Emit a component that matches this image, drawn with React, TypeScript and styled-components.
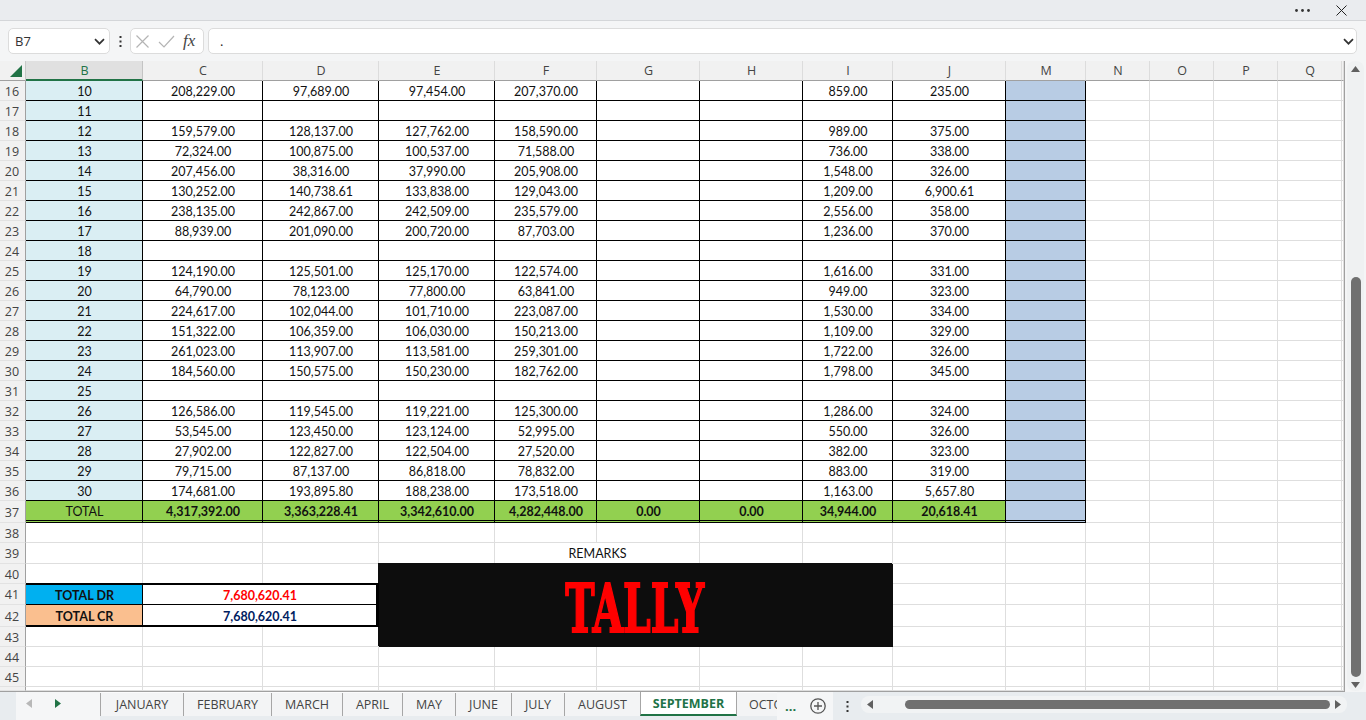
import React from "react";
import styled, { createGlobalStyle } from "styled-components";

const GlobalStyle = createGlobalStyle`
  html, body {
    margin: 0;
    height: 100%;
    overflow: hidden;
    background: #f4f5f6;
  }
`;

const columns = ["B", "C", "D", "E", "F", "G", "H", "I", "J", "M", "N", "O", "P", "Q"];

// day, C, D, E, F, I, J
const rows: string[][] = [
  ["10", "208,229.00", "97,689.00", "97,454.00", "207,370.00", "859.00", "235.00"],
  ["11"],
  ["12", "159,579.00", "128,137.00", "127,762.00", "158,590.00", "989.00", "375.00"],
  ["13", "72,324.00", "100,875.00", "100,537.00", "71,588.00", "736.00", "338.00"],
  ["14", "207,456.00", "38,316.00", "37,990.00", "205,908.00", "1,548.00", "326.00"],
  ["15", "130,252.00", "140,738.61", "133,838.00", "129,043.00", "1,209.00", "6,900.61"],
  ["16", "238,135.00", "242,867.00", "242,509.00", "235,579.00", "2,556.00", "358.00"],
  ["17", "88,939.00", "201,090.00", "200,720.00", "87,703.00", "1,236.00", "370.00"],
  ["18"],
  ["19", "124,190.00", "125,501.00", "125,170.00", "122,574.00", "1,616.00", "331.00"],
  ["20", "64,790.00", "78,123.00", "77,800.00", "63,841.00", "949.00", "323.00"],
  ["21", "224,617.00", "102,044.00", "101,710.00", "223,087.00", "1,530.00", "334.00"],
  ["22", "151,322.00", "106,359.00", "106,030.00", "150,213.00", "1,109.00", "329.00"],
  ["23", "261,023.00", "113,907.00", "113,581.00", "259,301.00", "1,722.00", "326.00"],
  ["24", "184,560.00", "150,575.00", "150,230.00", "182,762.00", "1,798.00", "345.00"],
  ["25"],
  ["26", "126,586.00", "119,545.00", "119,221.00", "125,300.00", "1,286.00", "324.00"],
  ["27", "53,545.00", "123,450.00", "123,124.00", "52,995.00", "550.00", "326.00"],
  ["28", "27,902.00", "122,827.00", "122,504.00", "27,520.00", "382.00", "323.00"],
  ["29", "79,715.00", "87,137.00", "86,818.00", "78,832.00", "883.00", "319.00"],
  ["30", "174,681.00", "193,895.80", "188,238.00", "173,518.00", "1,163.00", "5,657.80"],
];

const totals = ["4,317,392.00", "3,363,228.41", "3,342,610.00", "4,282,448.00", "0.00", "0.00", "34,944.00", "20,618.41"];

const tabs = [
  { name: "JANUARY", width: 83 },
  { name: "FEBRUARY", width: 88 },
  { name: "MARCH", width: 71 },
  { name: "APRIL", width: 60 },
  { name: "MAY", width: 53 },
  { name: "JUNE", width: 56 },
  { name: "JULY", width: 53 },
  { name: "AUGUST", width: 76 },
  { name: "SEPTEMBER", width: 97, active: true },
];

const Page = styled.div`
  width: 1366px;
  height: 720px;
  display: flex;
  flex-direction: column;
  overflow: hidden;
`;

const TitleBar = styled.div`
  height: 20px;
  flex: none;
  background: #eaecef;
  border-bottom: 1px solid #d4d6d9;
  display: flex;
  align-items: center;
  justify-content: flex-end;
  gap: 26px;
  padding-right: 19px;
  color: #222;
`;

const FormulaBar = styled.div`
  height: 40px;
  flex: none;
  box-sizing: border-box;
  padding: 7px 9px 7px 8px;
  display: flex;
  align-items: flex-start;
`;

const Field = styled.div<{ $width?: number }>`
  box-sizing: border-box;
  height: 26px;
  background: #fff;
  border: 1px solid #dcdcdc;
  border-radius: 5px;
  display: flex;
  align-items: center;
  ${(p) => (p.$width ? `width: ${p.$width}px; flex: none;` : "flex: 1;")}
`;

const NameBox = styled(Field)`
  justify-content: space-between;
  padding: 0 4px 0 6px;
  font: 13px "Open Sans", sans-serif;
  color: #333;
`;

const FormulaInput = styled(Field)`
  justify-content: space-between;
  padding: 0 2px 0 11px;
  font: 13px "Open Sans", sans-serif;
  color: #222;
`;

const ButtonGroup = styled(Field)`
  gap: 8px;
  padding: 0 4px;
`;

const Grip = styled.div`
  width: 20px;
  height: 26px;
  flex: none;
  display: flex;
  align-items: center;
  justify-content: center;
  color: #333;
`;

const FxLabel = styled.span`
  font: italic 17px "Liberation Serif", serif;
  color: #444;
`;

const Gap = styled.div`
  width: 4px;
  flex: none;
`;

const SheetArea = styled.div`
  display: flex;
  height: 631px;
  flex: none;
`;

const Sheet = styled.div`
  width: 1345px;
  box-sizing: border-box;
  flex: none;
  background: #fff;
  border-right: 1px solid #a0a0a0;
  border-bottom: 1px solid #a0a0a0;
  display: grid;
  grid-template-columns: 26px 117px 120px 116px 116px 102px 103px 103px 90px 113px 80px 64px 64px 64px 64px 2px;
  grid-template-rows:
    20px repeat(21, 20px) 22px 20px 21px 20px 21px 22px 20px 20px 20px 4px;
  font: 12.5px Lato, sans-serif;
  color: #111;
`;

const Corner = styled.div`
  background: #f1f1f1;
  border-right: 1px solid #c8c8c8;
  border-bottom: 1px solid #a0a0a0;
  display: flex;
  align-items: flex-end;
  justify-content: flex-end;
  padding: 0 3px 3px 0;
`;

const ColumnHeader = styled.div<{ $selected?: boolean }>`
  box-sizing: border-box;
  display: flex;
  align-items: center;
  justify-content: center;
  padding-left: 1px;
  font: 12.5px "Open Sans", sans-serif;
  background: ${(p) => (p.$selected ? "#e0e0e0" : "#f1f1f1")};
  color: ${(p) => (p.$selected ? "#217346" : "#444")};
  border-right: 1px solid ${(p) => (p.$selected ? "#c4c4c4" : "#dcdcdc")};
  border-bottom: ${(p) => (p.$selected ? "2px solid #217346" : "1px solid #a0a0a0")};
`;

const RowHeader = styled.div`
  box-sizing: border-box;
  display: flex;
  align-items: center;
  justify-content: center;
  padding: 1px 1px 0 0;
  font: 12.5px "Open Sans", sans-serif;
  color: #444;
  background: #f1f1f1;
  border-right: 1px solid #a0a0a0;
  border-bottom: 1px solid #e2e2e2;
  overflow: hidden;
`;

const Cell = styled.div<{ $fill?: string; $ruled?: boolean; $double?: boolean; $bold?: boolean; $span?: number }>`
  box-sizing: border-box;
  min-width: 0;
  display: flex;
  align-items: center;
  justify-content: center;
  padding: 1px 0 0 1px;
  white-space: nowrap;
  background: ${(p) => p.$fill || "#fff"};
  font-weight: ${(p) => (p.$bold ? 700 : 400)};
  border-right: 1px solid ${(p) => (p.$ruled ? "#000" : "#dedede")};
  border-bottom: ${(p) => (p.$double ? "3px double #000" : `1px solid ${p.$ruled ? "#000" : "#dedede"}`)};
  ${(p) => (p.$span ? `grid-column: span ${p.$span};` : "")}
`;

const SummaryCell = styled(Cell)<{ $ink?: string; $last?: boolean; $wide?: boolean }>`
  position: relative;
  padding-top: ${(p) => (p.$last ? "3px" : "2px")};
  font-weight: 700;
  color: ${(p) => p.$ink || "#111"};
  border-top: ${(p) => (p.$last ? "0" : "1px solid #000")};
  border-bottom: ${(p) => (p.$last ? "2px solid #000" : "1px solid #000")};
  border-right: ${(p) => (p.$wide ? "3px solid #000" : "1px solid #000")};
  box-shadow: ${(p) => (p.$last ? "none" : "0 -1px 0 #000")};
`;

const RemarkBox = styled.div`
  grid-column: span 5;
  grid-row: span 4;
  background: #0d0d0d;
  box-shadow: -1px -1px 0 #0d0d0d;
  position: relative;
  display: flex;
  align-items: center;
  justify-content: center;
  overflow: hidden;
`;

const RemarkText = styled.span`
  font: 700 68px "DejaVu Serif", serif;
  line-height: 1;
  color: #ff0000;
  -webkit-text-stroke: 2px #ff0000;
  transform: scaleX(0.58);
  margin: 4px 3px 0 0;
`;

const VerticalScroll = styled.div`
  flex: 1;
  padding: 0 2px 1px 2px;
  display: flex;
`;

const VerticalTrack = styled.div`
  width: 17px;
  background: #eff1f2;
  border-radius: 8px;
  display: flex;
  flex-direction: column;
  align-items: center;
  padding-top: 5px;
  box-sizing: border-box;
  color: #606060;
`;

const VerticalThumb = styled.div`
  width: 10px;
  height: 400px;
  margin: 205px 0 5px;
  background: #707070;
  border-radius: 5px;
`;

const TabBar = styled.div`
  flex: 1;
  display: flex;
  background: #e8ecef;
  position: relative;
`;

const TabNav = styled.div`
  width: 84px;
  margin-left: 16px;
  flex: none;
  background: #f5f6f7;
  box-sizing: border-box;
  padding: 0 39px 5px 10px;
  display: flex;
  align-items: center;
  justify-content: space-between;
`;

const TabStrip = styled.div`
  width: 677px;
  flex: none;
  display: flex;
  overflow: hidden;
  background: linear-gradient(#fbfbfc 0, #fbfbfc 1px, #e8ecef 1px);
`;

const Tab = styled.div<{ $width: number; $active?: boolean }>`
  box-sizing: border-box;
  width: ${(p) => p.$width}px;
  flex: none;
  height: 23px;
  margin-top: 1px;
  display: flex;
  align-items: center;
  justify-content: center;
  font: ${(p) => (p.$active ? 700 : 400)} 12.5px "Open Sans", sans-serif;
  color: ${(p) => (p.$active ? "#217346" : "#444")};
  background: ${(p) => (p.$active ? "#fff" : "#f3f4f5")};
  border-left: 1px solid #a6a6a6;
  ${(p) =>
    p.$active
      ? `
    height: 25px;
    margin-top: -1px;
    border-top: 1px solid #a6a6a6;
    border-right: 1px solid #a6a6a6;
    border-bottom: 2px solid #217346;
  `
      : ""}
`;

const TailTab = styled(Tab)`
  justify-content: flex-start;
  padding-left: 12px;
  border-left: 0;
`;

const MoreTabs = styled.div`
  width: 56px;
  flex: none;
  background: #f5f6f7;
  display: flex;
  align-items: center;
  padding: 0 7px 1px 8px;
  box-sizing: border-box;
  justify-content: space-between;
  color: #217346;
  font: 700 13px "Open Sans", sans-serif;
`;

const TabGrip = styled(Grip)`
  width: 28px;
  height: 28px;
`;

const HorizontalTrack = styled.div`
  width: 486px;
  height: 17px;
  margin-top: 4px;
  flex: none;
  background: #f1f3f4;
  border-radius: 8px;
  box-sizing: border-box;
  padding: 0 5px 0 6px;
  display: flex;
  align-items: center;
  color: #606060;
`;

const HorizontalThumb = styled.div`
  width: 425px;
  height: 9px;
  margin: 0 5px 0 32px;
  background: #707070;
  border-radius: 5px;
`;

const Chevron = () => (
  <svg width="11" height="7" viewBox="0 0 11 7" fill="none" stroke="#333" strokeWidth="1.7">
    <path d="M1 1.2l4.5 4.5 4.5-4.5" />
  </svg>
);

const VerticalDots = () => (
  <svg width="3" height="11" viewBox="0 0 3 11" fill="currentColor">
    <rect x="0.5" width="2" height="2" />
    <rect x="0.5" y="4.5" width="2" height="2" />
    <rect x="0.5" y="9" width="2" height="2" />
  </svg>
);

const Arrow = ({ dir, color = "currentColor" }: { dir: "up" | "down" | "left" | "right"; color?: string }) => {
  const shapes = {
    up: "M0 6L4.5 0 9 6z",
    down: "M0 0h9L4.5 6z",
    left: "M6 0v9L0 4.5z",
    right: "M0 0v9l6-4.5z",
  };
  return (
    <svg width={dir === "up" || dir === "down" ? 9 : 6} height={dir === "up" || dir === "down" ? 6 : 9} fill={color} style={{ flex: "none" }}>
      <path d={shapes[dir]} />
    </svg>
  );
};

const App: React.FC = () => {
  const blank = (key: string, span?: number) => <Cell key={key} $span={span} />;
  const trailing = (key: string) =>
    ["N", "O", "P", "Q", "R"].map((c) => blank(`${key}-${c}`));

  return (
    <Page>
      <GlobalStyle />
      <TitleBar>
        <svg width="15" height="3" viewBox="0 0 15 3" fill="#333">
          <circle cx="1.5" cy="1.5" r="1.4" />
          <circle cx="7.5" cy="1.5" r="1.4" />
          <circle cx="13.5" cy="1.5" r="1.4" />
        </svg>
        <svg width="11" height="11" viewBox="0 0 11 11" stroke="#222" strokeWidth="1">
          <path d="M0.5 0.5l10 10M10.5 0.5l-10 10" />
        </svg>
      </TitleBar>
      <FormulaBar>
        <NameBox $width={102}>
          B7
          <Chevron />
        </NameBox>
        <Grip>
          <VerticalDots />
        </Grip>
        <ButtonGroup $width={74}>
          <svg width="15" height="13" viewBox="0 0 15 13" stroke="#b4b4b4" strokeWidth="1.2" fill="none">
            <path d="M1.5 0.5l12 12M13.5 0.5l-12 12" />
          </svg>
          <svg width="17" height="13" viewBox="0 0 17 13" stroke="#b4b4b4" strokeWidth="1.2" fill="none">
            <path d="M1 7l5 5L16 1" />
          </svg>
          <FxLabel>fx</FxLabel>
        </ButtonGroup>
        <Gap />
        <FormulaInput>
          .
          <Chevron />
        </FormulaInput>
      </FormulaBar>
      <SheetArea>
        <Sheet>
          <Corner>
            <svg width="12" height="12" viewBox="0 0 12 12" fill="#217346">
              <path d="M12 0v12H0z" />
            </svg>
          </Corner>
          {columns.map((c, i) => (
            <ColumnHeader key={c} $selected={i === 0}>
              {c}
            </ColumnHeader>
          ))}
          <ColumnHeader />

          {rows.map((row, i) => {
            const [day, c, d, e, f, ii, j] = row;
            const n = i + 16;
            return (
              <React.Fragment key={n}>
                <RowHeader>{n}</RowHeader>
                <Cell $ruled $fill="#daeef3">{day}</Cell>
                <Cell $ruled>{c}</Cell>
                <Cell $ruled>{d}</Cell>
                <Cell $ruled>{e}</Cell>
                <Cell $ruled>{f}</Cell>
                <Cell $ruled />
                <Cell $ruled />
                <Cell $ruled>{ii}</Cell>
                <Cell $ruled>{j}</Cell>
                <Cell $ruled $fill="#b8cce4" />
                {trailing(`r${n}`)}
              </React.Fragment>
            );
          })}

          <RowHeader>37</RowHeader>
          <Cell $ruled $double $fill="#92d050">TOTAL</Cell>
          {totals.map((t, i) => (
            <Cell key={i} $ruled $double $bold $fill="#92d050">{t}</Cell>
          ))}
          <Cell $ruled $double $fill="#b8cce4" />
          {trailing("r37")}

          <RowHeader>38</RowHeader>
          {columns.map((c) => blank(`r38-${c}`))}
          {blank("r38-R")}

          <RowHeader>39</RowHeader>
          {blank("r39-B")}
          {blank("r39-C")}
          {blank("r39-D")}
          {blank("r39-E")}
          <Cell $span={2}>REMARKS</Cell>
          {["H", "I", "J", "M", "N", "O", "P", "Q", "R"].map((c) => blank(`r39-${c}`))}

          <RowHeader>40</RowHeader>
          {blank("r40-B")}
          {blank("r40-C")}
          {blank("r40-D")}
          <RemarkBox>
            <RemarkText>TALLY</RemarkText>
          </RemarkBox>
          {["J", "M", "N", "O", "P", "Q", "R"].map((c) => blank(`r40-${c}`))}

          <RowHeader>41</RowHeader>
          <SummaryCell $fill="#00b0f0">TOTAL DR</SummaryCell>
          <SummaryCell $span={2} $wide $ink="#ff0000">7,680,620.41</SummaryCell>
          {["J", "M", "N", "O", "P", "Q", "R"].map((c) => blank(`r41-${c}`))}

          <RowHeader>42</RowHeader>
          <SummaryCell $last $fill="#fabf8f">TOTAL CR</SummaryCell>
          <SummaryCell $last $span={2} $wide $ink="#002060">7,680,620.41</SummaryCell>
          {["J", "M", "N", "O", "P", "Q", "R"].map((c) => blank(`r42-${c}`))}

          <RowHeader>43</RowHeader>
          {blank("r43-B")}
          {blank("r43-C")}
          {blank("r43-D")}
          {["J", "M", "N", "O", "P", "Q", "R"].map((c) => blank(`r43-${c}`))}

          {[44, 45, 46].map((n) => (
            <React.Fragment key={n}>
              <RowHeader>{n < 46 ? n : ""}</RowHeader>
              {columns.map((c) => blank(`r${n}-${c}`))}
              {blank(`r${n}-R`)}
            </React.Fragment>
          ))}
        </Sheet>
        <VerticalScroll>
          <VerticalTrack>
            <Arrow dir="up" />
            <VerticalThumb />
            <Arrow dir="down" />
          </VerticalTrack>
        </VerticalScroll>
      </SheetArea>
      <TabBar>
        <TabNav>
          <Arrow dir="left" color="#b8b8b8" />
          <Arrow dir="right" color="#217346" />
        </TabNav>
        <TabStrip>
          {tabs.map((t) => (
            <Tab key={t.name} $width={t.width} $active={t.active}>
              {t.name}
            </Tab>
          ))}
          <TailTab $width={80}>OCTOBER</TailTab>
        </TabStrip>
        <MoreTabs>
          <span>...</span>
          <svg width="16" height="16" viewBox="0 0 16 16" fill="none" stroke="#555" strokeWidth="1.3">
            <circle cx="8" cy="8" r="7.2" />
            <path d="M8 4v8M4 8h8" />
          </svg>
        </MoreTabs>
        <TabGrip>
          <VerticalDots />
        </TabGrip>
        <HorizontalTrack>
          <Arrow dir="left" />
          <HorizontalThumb />
          <Arrow dir="right" />
        </HorizontalTrack>
      </TabBar>
    </Page>
  );
};

export default App;
